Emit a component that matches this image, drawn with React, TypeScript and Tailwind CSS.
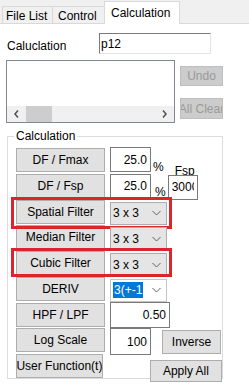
import React from 'react';

function Btn({ children, className = '' }: { children: React.ReactNode; className?: string }) {
  return (
    <button
      className={`flex items-center justify-center overflow-hidden whitespace-nowrap border border-[#adadad] bg-[#e1e1e1] text-[12px] text-black ${className}`}
    >
      {children}
    </button>
  );
}

function Field({ value, className = '', left = false }: { value: string; className?: string; left?: boolean }) {
  return (
    <input
      readOnly
      value={value}
      className={`border border-[#7a7a7a] bg-white text-[12px] text-black outline-none ${left ? 'pl-[3px] pr-[3px] text-left' : 'px-[3px] text-right'} ${className}`}
    />
  );
}

function Chevron() {
  return (
    <svg width="9" height="5" viewBox="0 0 9 5" className="absolute right-[5px] top-1/2 -translate-y-1/2">
      <polyline points="0.5,0.5 4.5,4.5 8.5,0.5" fill="none" stroke="#606060" strokeWidth="1" />
    </svg>
  );
}

function Combo({ children, white = false }: { children: React.ReactNode; white?: boolean }) {
  return (
    <div
      className={`relative ml-[5px] mt-[2px] flex h-[23px] w-[57px] items-center border pl-[2px] text-[12px] ${
        white ? 'border-[#c4c4c4] bg-white' : 'border-[#acacac] bg-[#e5e5e5]'
      }`}
    >
      {children}
      <Chevron />
    </div>
  );
}

function RedBox({ h }: { h: string }) {
  return <div className={`pointer-events-none absolute -left-[5px] -top-[3px] w-[161px] border-[3px] border-[#d9262c] ${h}`} />;
}

export default function App() {
  return (
    <div className="relative h-[391px] w-[249px] overflow-hidden bg-white font-['Liberation_Sans',Arial,sans-serif] text-[12px] text-black">
      {/* tabs */}
      <div className="flex h-[24px] items-end border-b border-[#d9d9d9] bg-[#f0f0f0] pl-[2px]">
        <div className="flex h-[17px] w-[51px] items-center border border-b-0 border-[#d9d9d9] pl-[3px] pt-px">File List</div>
        <div className="-ml-px flex h-[17px] w-[53px] items-center border border-b-0 border-[#d9d9d9] pl-[5px] pt-px">Control</div>
        <div className="relative -mb-px -ml-px flex h-[23px] w-[76px] items-center border border-b-0 border-[#d9d9d9] bg-white pb-[1px] pl-[6px]">
          Calculation
        </div>
      </div>

      {/* expression */}
      <div className="flex pl-[7px] pt-[9px]">
        <span className="mt-[4px] w-[92px]">Caluclation</span>
        <input
          readOnly
          value="p12"
          className="h-[21px] w-[112px] border border-r-[#e3e3e3] border-b-[#e3e3e3] border-l-[#7a7a7a] border-t-[#7a7a7a] bg-white px-[1px] text-[12px] outline-none"
        />
      </div>

      <div className="mt-[5px] flex pl-[6px]">
        <div className="flex h-[63px] w-[169px] flex-col justify-end border border-[#828790] bg-white">
          <div className="flex h-[16px] items-center bg-[#f0f0f0]">
            <div className="flex w-[19px] justify-center">
              <svg width="5" height="8" viewBox="0 0 5 8">
                <polyline points="4,0.5 1,4 4,7.5" fill="none" stroke="#505050" strokeWidth="1.5" />
              </svg>
            </div>
            <div className="h-[16px] w-[26px] bg-[#cdcdcd]" />
            <div className="flex-1" />
            <div className="flex w-[19px] justify-center">
              <svg width="5" height="8" viewBox="0 0 5 8">
                <polyline points="1,0.5 4,4 1,7.5" fill="none" stroke="#505050" strokeWidth="1.5" />
              </svg>
            </div>
          </div>
        </div>
        <div className="ml-[5px] flex flex-col">
          <div className="mt-[6px] flex h-[20px] w-[43px] items-center justify-center border border-[#bfbfbf] bg-[#cccccc] text-[#9a9a9a]">
            Undo
          </div>
          <div className="mt-[12px] flex h-[21px] w-[43px] items-center justify-center overflow-hidden whitespace-nowrap border border-[#bfbfbf] bg-[#cccccc] text-[#9a9a9a]">
            All Clear
          </div>
        </div>
      </div>

      {/* calculation group */}
      <div className="relative ml-[7px] mt-[13px] h-[243px] w-[216px] border border-[#dcdcdc] pl-[8px] pt-[11px]">
        <span className="absolute -top-[8px] left-[6px] bg-white px-[2px] leading-[14px]">Calculation</span>

        <div className="flex flex-col gap-[1.75px]">
          <div className="flex h-[24px] items-start">
            <Btn className="h-[24px] w-[89px]">DF / Fmax</Btn>
            <Field value="25.0" className="-mt-px ml-[5px] h-[25px] w-[41px]" />
            <span className="-mb-px ml-[2px] self-end leading-[12px]">%</span>
            <span className="-mb-[5px] ml-[11px] self-end leading-[12px]">Fsp</span>
          </div>

          <div className="flex h-[24px] items-start">
            <Btn className="h-[24px] w-[89px]">DF / Fsp</Btn>
            <Field value="25.0" className="ml-[5px] h-[25px] w-[41px]" />
            <span className="ml-[4px] self-end leading-[12px]">%</span>
            <Field value="3000" left className="relative ml-[2px] mt-px h-[25px] w-[30px]" />
          </div>

          <div className="relative flex h-[24px] items-start">
            <Btn className="h-[24px] w-[89px]">Spatial Filter</Btn>
            <Combo>3 x 3</Combo>
            <RedBox h="h-[32px]" />
          </div>

          <div className="flex h-[24px] items-start">
            <Btn className="h-[24px] w-[89px]">Median Filter</Btn>
            <Combo>3 x 3</Combo>
          </div>

          <div className="relative flex h-[24px] items-start">
            <Btn className="h-[24px] w-[89px]">Cubic Filter</Btn>
            <Combo>3 x 3</Combo>
            <RedBox h="h-[29px]" />
          </div>

          <div className="flex h-[24px] items-start">
            <Btn className="h-[24px] w-[89px]">DERIV</Btn>
            <Combo white>
              <span className="bg-[#0078d7] px-px leading-[16px] text-white">3(+-1</span>
            </Combo>
          </div>

          <div className="flex h-[24px] items-start">
            <Btn className="h-[24px] w-[89px]">HPF / LPF</Btn>
            <Field value="0.50" className="-mt-px ml-[5px] h-[26px] w-[60px]" />
          </div>

          <div className="flex h-[24px] items-start">
            <Btn className="h-[24px] w-[89px]">Log Scale</Btn>
            <Field value="100" className="ml-[5px] h-[27px] w-[41px]" />
            <Btn className="ml-[11px] mt-[2px] h-[24px] w-[59px]">Inverse</Btn>
          </div>

          <div className="flex h-[24px] items-start">
            <Btn className="h-[24px] w-[89px]">User Function(t)</Btn>
            <Btn className="relative z-10 ml-[47px] mt-[6px] h-[22px] w-[74px]">Apply All</Btn>
          </div>
        </div>
      </div>
    </div>
  );
}
